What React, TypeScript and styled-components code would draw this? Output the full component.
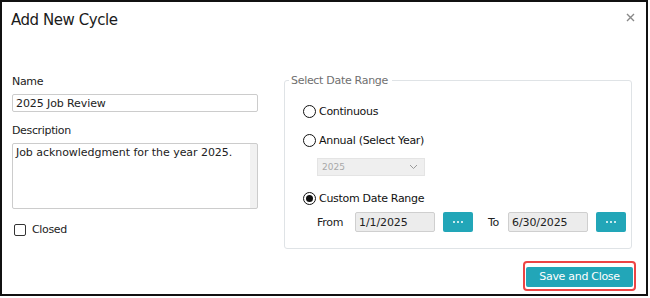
import React, { useState } from 'react';
import styled, { createGlobalStyle } from 'styled-components';

const GlobalStyle = createGlobalStyle`
  html, body {
    margin: 0;
    padding: 0;
    background: #fff;
  }
  body {
    font-family: "DejaVu Sans", Verdana, sans-serif;
    color: #222;
  }
`;

const Frame = styled.div`
  width: 648px;
  height: 296px;
  box-sizing: border-box;
  border: 2px solid #111;
  background: #fff;
  display: flex;
  flex-direction: column;
`;

const Header = styled.div`
  display: flex;
  justify-content: space-between;
  align-items: flex-start;
  padding: 9px 10px 0 9px;
  height: 60px;
  box-sizing: border-box;
`;

const Title = styled.h1`
  margin: 0;
  font-size: 15px;
  font-weight: normal;
  letter-spacing: -0.45px;
  color: #1b1b1b;
`;

const CloseBtn = styled.button`
  border: none;
  background: none;
  padding: 0;
  margin-top: 2px;
  width: 10px;
  height: 10px;
  cursor: pointer;
  display: flex;
`;

const Body = styled.div`
  display: flex;
  padding: 0 14px 0 10px;
  gap: 26px;
`;

const LeftCol = styled.div`
  width: 246px;
  flex-shrink: 0;
  display: flex;
  flex-direction: column;
  padding-top: 13px;
`;

const Label = styled.label`
  font-size: 11px;
  letter-spacing: -0.35px;
  color: #222;
  margin-bottom: 6px;
`;

const TextInput = styled.input`
  width: 100%;
  box-sizing: border-box;
  height: 18px;
  border: 1px solid #ccc;
  border-radius: 2px;
  padding: 0 3px;
  font-family: inherit;
  font-size: 11px;
  letter-spacing: -0.1px;
  color: #222;
  margin-bottom: 12px;
`;

const TextArea = styled.textarea`
  width: 100%;
  box-sizing: border-box;
  height: 66px;
  border: 1px solid #ccc;
  border-radius: 2px;
  padding: 2px 10px 2px 3px;
  font-family: inherit;
  font-size: 11px;
  letter-spacing: -0.05px;
  color: #222;
  resize: none;
  overflow: hidden;
  background: linear-gradient(to left, #f1f1f1 7px, #fff 7px);
`;

const CheckRow = styled.label`
  display: flex;
  align-items: center;
  gap: 6px;
  margin-top: 14px;
  font-size: 11px;
  letter-spacing: -0.35px;
  padding-left: 2px;
`;

const CheckBox = styled.span`
  width: 10px;
  height: 10px;
  border: 1px solid #333;
  border-radius: 2px;
  display: inline-block;
`;

const Fieldset = styled.fieldset`
  flex: 1;
  min-width: 0;
  margin: 12px 0 0 0;
  border: 1px solid #dfe3e6;
  border-radius: 3px;
  padding: 10px 0 10px 18px;
  height: 175px;
  box-sizing: border-box;
`;

const Legend = styled.legend`
  font-size: 11px;
  letter-spacing: -0.3px;
  color: #6f6f6f;
  padding: 0 4px 0 2px;
  margin-left: -14px;
`;

const RadioRow = styled.label<{ $mt: number }>`
  display: flex;
  align-items: center;
  gap: 3px;
  font-size: 11px;
  letter-spacing: -0.3px;
  color: #111;
  height: 16px;
  margin-top: ${p => p.$mt}px;
`;

const RadioCircle = styled.span<{ $checked?: boolean }>`
  width: 11px;
  height: 11px;
  border: 1px solid #111;
  border-radius: 50%;
  display: inline-flex;
  align-items: center;
  justify-content: center;
  &::after {
    content: '';
    width: 7px;
    height: 7px;
    border-radius: 50%;
    background: ${p => (p.$checked ? '#111' : 'transparent')};
  }
`;

const YearSelect = styled.div`
  margin: 10px 0 0 14px;
  width: 108px;
  height: 18px;
  box-sizing: border-box;
  background: #efefef;
  border: 1px solid #e4e4e4;
  color: #a8a8a8;
  font-size: 9px;
  display: flex;
  align-items: center;
  justify-content: space-between;
  padding: 0 6px 0 4px;
`;

const DateRow = styled.div`
  display: flex;
  align-items: center;
  margin: 6px 0 0 14px;
  font-size: 11px;
  letter-spacing: -0.3px;
  color: #222;
`;

const DateLabel = styled.span<{ $w: number }>`
  width: ${p => p.$w}px;
  flex-shrink: 0;
`;

const DateInput = styled.input`
  width: 80px;
  height: 20px;
  flex-shrink: 0;
  box-sizing: border-box;
  background: #ececec;
  border: 1px solid #cfcfcf;
  border-radius: 2px;
  padding: 0 3px;
  font-family: inherit;
  font-size: 11px;
  letter-spacing: -0.1px;
  color: #222;
`;

const DotsBtn = styled.button`
  width: 30px;
  height: 20px;
  flex-shrink: 0;
  margin: 0 15px 0 8px;
  border: none;
  border-radius: 2px;
  background: #22a6b8;
  display: flex;
  align-items: center;
  justify-content: center;
  gap: 2px;
  padding: 0;
  cursor: pointer;
`;

const Dot = styled.span`
  width: 2px;
  height: 2px;
  background: #fff;
  border-radius: 1px;
`;

const Footer = styled.div`
  display: flex;
  justify-content: flex-end;
  padding: 12px 10px 0 0;
`;

const Highlight = styled.div`
  border: 2px solid #ee4444;
  border-radius: 4px;
  padding: 2px 1px;
`;

const SaveBtn = styled.button`
  height: 20px;
  width: 107px;
  padding: 0;
  border: none;
  border-radius: 2px;
  background: #22a6b8;
  color: #fff;
  font-family: inherit;
  font-size: 11px;
  letter-spacing: -0.3px;
  cursor: pointer;
`;

export default function App() {
  const [name, setName] = useState('2025 Job Review');
  const [desc, setDesc] = useState('Job acknowledgment for the year 2025.');

  return (
    <>
      <GlobalStyle />
      <Frame>
        <Header>
          <Title>Add New Cycle</Title>
          <CloseBtn aria-label="close">
            <svg width="9" height="9" viewBox="0 0 9 9">
              <path d="M1 1L8 8M8 1L1 8" stroke="#888" strokeWidth="1.4" />
            </svg>
          </CloseBtn>
        </Header>
        <Body>
          <LeftCol>
            <Label>Name</Label>
            <TextInput value={name} onChange={e => setName(e.target.value)} />
            <Label>Description</Label>
            <TextArea value={desc} onChange={e => setDesc(e.target.value)} />
            <CheckRow>
              <CheckBox />
              Closed
            </CheckRow>
          </LeftCol>
          <Fieldset>
            <Legend>Select Date Range</Legend>
            <RadioRow $mt={6}>
              <RadioCircle />
              Continuous
            </RadioRow>
            <RadioRow $mt={13}>
              <RadioCircle />
              Annual (Select Year)
            </RadioRow>
            <YearSelect>
              2025
              <svg width="9" height="6" viewBox="0 0 9 6">
                <path d="M1 1L4.5 4.5L8 1" stroke="#999" strokeWidth="1" fill="none" />
              </svg>
            </YearSelect>
            <RadioRow $mt={14}>
              <RadioCircle $checked />
              Custom Date Range
            </RadioRow>
            <DateRow>
              <DateLabel $w={38}>From</DateLabel>
              <DateInput value="1/1/2025" readOnly />
              <DotsBtn>
                <Dot />
                <Dot />
                <Dot />
              </DotsBtn>
              <DateLabel $w={20}>To</DateLabel>
              <DateInput value="6/30/2025" readOnly />
              <DotsBtn>
                <Dot />
                <Dot />
                <Dot />
              </DotsBtn>
            </DateRow>
          </Fieldset>
        </Body>
        <Footer>
          <Highlight>
            <SaveBtn>Save and Close</SaveBtn>
          </Highlight>
        </Footer>
      </Frame>
    </>
  );
}
